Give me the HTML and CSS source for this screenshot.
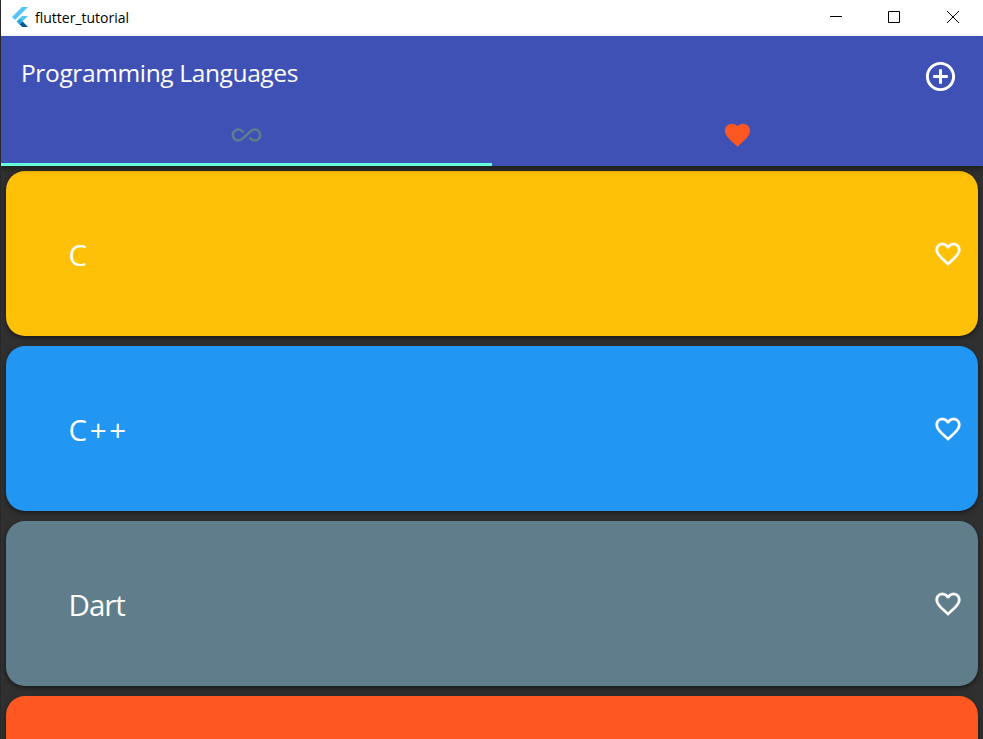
FILE: index.html
```html
<!DOCTYPE html>
<html lang="en">
<head>
<meta charset="utf-8">
<title>flutter_tutorial</title>
<link rel="stylesheet" href="styles.css">
</head>
<body>
<svg class="defs" width="0" height="0">
  <symbol id="heart-outline" viewBox="0 0 24 24"><path d="M16.5 3c-1.74 0-3.41.81-4.5 2.09C10.91 3.81 9.24 3 7.5 3 4.42 3 2 5.42 2 8.5c0 3.78 3.4 6.86 8.55 11.54L12 21.35l1.45-1.32C18.6 15.36 22 12.28 22 8.5 22 5.42 19.58 3 16.5 3zm-4.4 15.55l-.1.1-.1-.1C7.14 14.24 4 11.39 4 8.5 4 6.5 5.5 5 7.5 5c1.54 0 3.04.99 3.57 2.36h1.87C13.46 5.99 14.96 5 16.5 5c2 0 3.5 1.5 3.5 3.5 0 2.89-3.14 5.74-7.9 10.05z"/></symbol>
</svg>
<div class="window">
  <header class="titlebar">
    <svg class="logo" width="16" height="20" viewBox="0 0 16 20">
      <path fill="#54c5f8" d="M10 0h6L3 13 0 10z"/>
      <path fill="#54c5f8" d="M10 9h6l-5.300 5.300L7.700 17.500 4.700 14.400z"/>
      <path fill="#29a6e5" d="M7.700 11.400l3 3-3 3-3-3z"/>
      <path fill="#01579b" d="M7.700 17.400l3-3L16 20h-5.700z"/>
    </svg>
    <span class="window-title">flutter_tutorial</span>
    <svg class="control" width="58" height="36" viewBox="0 0 58 36"><path d="M23 16.500h12"/></svg>
    <svg class="control" width="58" height="36" viewBox="0 0 58 36"><path d="M23.500 11.500h11v11h-11z"/></svg>
    <svg class="control" width="60" height="36" viewBox="0 0 60 36"><path d="M24 11l12 12M36 11L24 23"/></svg>
  </header>
  <section class="appbar">
    <div class="toolbar">
      <h1>Programming Languages</h1>
      <svg class="add" width="35" height="35" viewBox="0 0 24 24"><path d="M13 7h-2v4H7v2h4v4h2v-4h4v-2h-4V7zm-1-5C6.480 2 2 6.480 2 12s4.480 10 10 10 10-4.480 10-10S17.520 2 12 2zm0 18c-4.410 0-8-3.590-8-8s3.590-8 8-8 8 3.590 8 8-3.590 8-8 8z"/></svg>
    </div>
    <nav class="tabs">
      <div class="tab active"><svg class="all" width="31" height="30" viewBox="0 0 24 24"><path d="M18.600 6.620c-1.440 0-2.800.56-3.770 1.530L12 10.660 10.480 12h.01L7.800 14.390c-.64.64-1.490.99-2.400.99-1.870 0-3.390-1.510-3.390-3.380S3.530 8.620 5.400 8.620c.91 0 1.760.35 2.440 1.030l1.130 1 1.510-1.340L9.220 8.200C8.200 7.180 6.840 6.620 5.400 6.620 2.420 6.620 0 9.040 0 12s2.420 5.380 5.400 5.380c1.440 0 2.800-.56 3.770-1.530l2.830-2.500.01.010L13.520 12h-.01l2.690-2.390c.64-.64 1.490-.99 2.400-.99 1.870 0 3.390 1.510 3.390 3.380s-1.520 3.380-3.390 3.380c-.9 0-1.760-.35-2.440-1.030l-1.140-1.010-1.510 1.340 1.270 1.120c1.020 1.010 2.370 1.570 3.820 1.570 2.980 0 5.400-2.410 5.400-5.380s-2.420-5.370-5.400-5.370z"/></svg></div>
      <div class="tab"><svg class="favorite" width="31" height="30" viewBox="0 0 24 24"><path d="M12 21.350l-1.450-1.320C5.400 15.360 2 12.280 2 8.500 2 5.420 4.420 3 7.500 3c1.740 0 3.410.81 4.500 2.090C13.090 3.810 14.760 3 16.500 3 19.580 3 22 5.420 22 8.500c0 3.780-3.400 6.860-8.550 11.540L12 21.350z"/></svg></div>
    </nav>
  </section>
  <main class="list">
    <article class="card amber"><span>C</span><svg width="30" height="30"><use href="#heart-outline"/></svg></article>
    <article class="card blue"><span class="cpp">C++</span><svg width="30" height="30"><use href="#heart-outline"/></svg></article>
    <article class="card slate"><span class="dart">Dart</span><svg width="30" height="30"><use href="#heart-outline"/></svg></article>
    <article class="card orange"></article>
  </main>
</div>
</body>
</html>
```
FILE: styles.css
```css
* { box-sizing: border-box; }
body {
  margin: 0;
  height: 739px;
  overflow: hidden;
  background: #303030;
  font-family: "Open Sans", "Noto Sans", sans-serif;
}
.defs { position: absolute; }
svg { display: block; flex: none; }
.window {
  height: 739px;
  overflow: hidden;
  border-left: 1px solid #292929;
}
.titlebar {
  display: flex;
  align-items: center;
  height: 36px;
  padding-left: 11px;
  background: #fff;
}
.logo { margin-top: -2px; }
.window-title {
  margin: 0 auto 0 7px;
  color: #000;
  font-size: 14px;
  line-height: 36px;
}
.control { fill: none; stroke: #000; stroke-width: 1; }
.appbar {
  position: relative;
  height: 130px;
  background: #3f51b5;
  box-shadow: 0 3px 6px rgba(0, 0, 0, .4);
}
.toolbar {
  display: flex;
  align-items: center;
  justify-content: space-between;
  height: 70px;
  padding: 11px 25px 0 20px;
}
h1 {
  margin: -8px 0 0;
  color: #fff;
  font-size: 24.500px;
  font-weight: 400;
  line-height: 34px;
  letter-spacing: -.37px;
}
.add { fill: #fff; }
.tabs { display: flex; height: 60px; }
.tab {
  display: flex;
  flex: 1;
  justify-content: center;
  padding-top: 14px;
  border-bottom: 3px solid transparent;
}
.tab.active { border-bottom-color: #64ffda; }
.all { fill: #607d8b; }
.favorite { fill: #ff5722; }
.list {
  display: flex;
  flex-direction: column;
  gap: 10px;
  padding: 5px;
}
.card {
  display: flex;
  flex: none;
  align-items: center;
  justify-content: space-between;
  height: 165px;
  padding: 0 15px 0 62px;
  border-radius: 19px;
  color: #fff;
  font-size: 29.500px;
  line-height: 40px;
  box-shadow: 0 2px 5px rgba(0, 0, 0, .5);
}
.card span { margin: 2px 0 0 .5px; }
.card .cpp { letter-spacing: 2.600px; }
.card .dart { letter-spacing: -1px; }
.card svg { fill: #fff; stroke: #fff; stroke-width: .2; }
.amber { background: #ffc107; }
.blue { background: #2196f3; }
.slate { background: #607d8b; }
.orange { background: #ff5722; }
```
